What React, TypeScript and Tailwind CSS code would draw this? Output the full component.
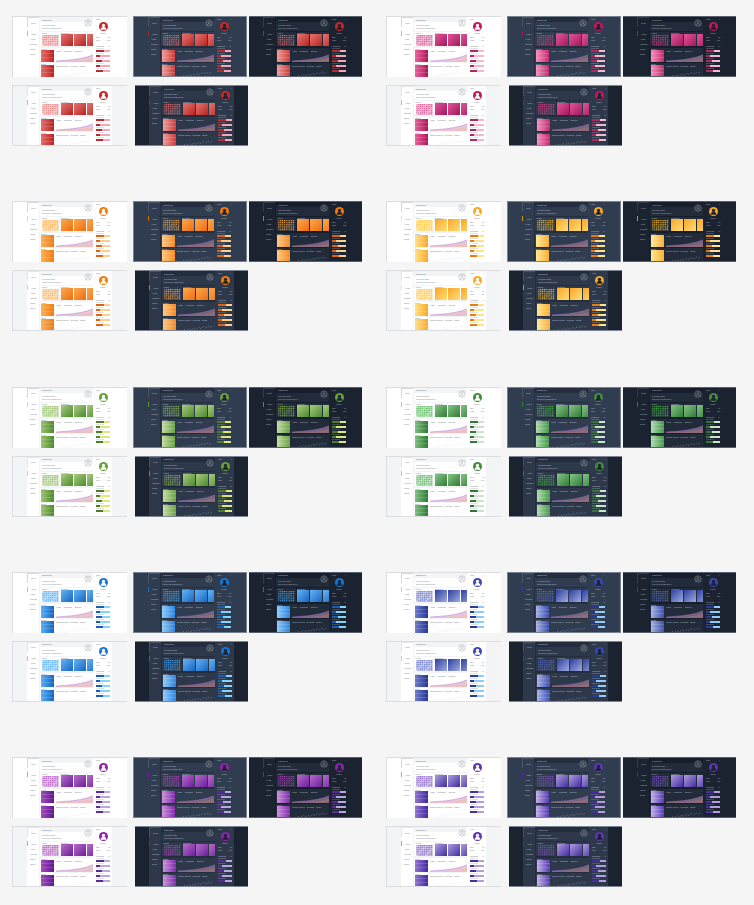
type Mode = "light" | "lightAlt" | "slate" | "navy" | "navyAlt";

type Theme = {
  tile: string;
  stack: string;
  stackDark: string;
  solid: string;
  bar: string;
  soft: string;
  line: string;
  lineDark: string;
  cell: string;
};

const themes: Record<string, Theme> = {
  red: { tile: "from-[#e57373] to-[#b71c1c]", stack: "from-[#e26a6a] to-[#b82020]", stackDark: "from-[#f09a9a] to-[#c93a3a]", solid: "bg-[#c62828]", bar: "bg-[#a51818]", soft: "bg-[#f4a6b8]", line: "border-[#f3a0a0]", lineDark: "border-[#a52a2a]", cell: "#e57373" },
  magenta: { tile: "from-[#e0559a] to-[#a3125c]", stack: "from-[#e85f9f] to-[#ad1457]", stackDark: "from-[#f48fbe] to-[#c2266f]", solid: "bg-[#c2185b]", bar: "bg-[#a0104e]", soft: "bg-[#f6b6cf]", line: "border-[#f3a0c4]", lineDark: "border-[#a3195f]", cell: "#d6438b" },
  orange: { tile: "from-[#f9a94b] to-[#ef6c00]", stack: "from-[#fbb152] to-[#ef7a0a]", stackDark: "from-[#fcc77e] to-[#f28a1e]", solid: "bg-[#f57c00]", bar: "bg-[#d95000]", soft: "bg-[#ffcf8a]", line: "border-[#fbc98a]", lineDark: "border-[#c9710f]", cell: "#f9a94b" },
  amber: { tile: "from-[#f8a51f] to-[#ffdf73]", stack: "from-[#ffe080] to-[#f9a825]", stackDark: "from-[#ffe88f] to-[#f9ae2f]", solid: "bg-[#f9a825]", bar: "bg-[#e26a00]", soft: "bg-[#ffe38a]", line: "border-[#ffe38a]", lineDark: "border-[#c9941f]", cell: "#fbc02d" },
  green: { tile: "from-[#a9cc80] to-[#4a8a2a]", stack: "from-[#9cc46f] to-[#4d8a2c]", stackDark: "from-[#c3dca3] to-[#6aa344]", solid: "bg-[#689f38]", bar: "bg-[#33691e]", soft: "bg-[#dde87c]", line: "border-[#c5e1a5]", lineDark: "border-[#5f8f35]", cell: "#8bb95c" },
  forest: { tile: "from-[#86c489] to-[#2e7d32]", stack: "from-[#7fbf83] to-[#2e7d32]", stackDark: "from-[#aedbb0] to-[#469a4a]", solid: "bg-[#43893f]", bar: "bg-[#1b5e20]", soft: "bg-[#c8e6c9]", line: "border-[#a5d6a7]", lineDark: "border-[#2e7d32]", cell: "#4caf50" },
  blue: { tile: "from-[#64b5f6] to-[#1565c0]", stack: "from-[#5aaef2] to-[#1565c0]", stackDark: "from-[#8ecbf9] to-[#2b84dc]", solid: "bg-[#1976d2]", bar: "bg-[#0d47a1]", soft: "bg-[#81d4fa]", line: "border-[#90caf9]", lineDark: "border-[#1e6fb8]", cell: "#42a5f5" },
  indigo: { tile: "from-[#2f3d9e] to-[#a3acdf]", stack: "from-[#6f7cc9] to-[#283593]", stackDark: "from-[#a9b2e2] to-[#3f4fb0]", solid: "bg-[#3949ab]", bar: "bg-[#1a237e]", soft: "bg-[#90caf9]", line: "border-[#c5cae9]", lineDark: "border-[#303f9f]", cell: "#5c6bc0" },
  purple: { tile: "from-[#bb6bca] to-[#6a1b9a]", stack: "from-[#a44cbb] to-[#5e1690]", stackDark: "from-[#cf8edb] to-[#7d2aa8]", solid: "bg-[#8e24aa]", bar: "bg-[#4a148c]", soft: "bg-[#b9a7e0]", line: "border-[#ce93d8]", lineDark: "border-[#7b1fa2]", cell: "#ab47bc" },
  violet: { tile: "from-[#b39ddb] to-[#4527a0]", stack: "from-[#9274cf] to-[#4527a0]", stackDark: "from-[#c4afe6] to-[#5b38b3]", solid: "bg-[#5e35b1]", bar: "bg-[#311b92]", soft: "bg-[#b39ddb]", line: "border-[#b39ddb]", lineDark: "border-[#512da8]", cell: "#7e57c2" },
};

const skins: Record<Mode, { dark: boolean; frame: string; margin: string; side: string; main: string; card: string; right: string; text: string; faint: string; box: string }> = {
  light: { dark: false, frame: "border-t border-l border-[#dcdde0]", margin: "bg-white", side: "bg-white", main: "bg-[#f3f4f6]", card: "bg-white", right: "bg-white", text: "text-[#555b66]", faint: "bg-[#c4c7cd]", box: "border-[#d5d7db]" },
  lightAlt: { dark: false, frame: "border-y border-l border-[#dcdde0]", margin: "bg-[#f3f4f6]", side: "bg-white", main: "bg-[#f3f4f6]", card: "bg-white", right: "bg-white", text: "text-[#555b66]", faint: "bg-[#c4c7cd]", box: "border-[#e4e5e8]" },
  slate: { dark: true, frame: "border border-[#76808f]", margin: "bg-[#303d50]", side: "bg-[#303d50]", main: "bg-[#242e3e]", card: "bg-[#303d50]", right: "bg-[#303d50]", text: "text-[#d5dae2]", faint: "bg-[#77818f]", box: "border-[#4a5567]" },
  navy: { dark: true, frame: "border-y border-[#55606f]", margin: "bg-[#1b2331]", side: "bg-[#1b2331]", main: "bg-[#171e2b]", card: "bg-[#212b3a]", right: "bg-[#1b2331]", text: "text-[#cdd2da]", faint: "bg-[#697382]", box: "border-[#323c4b]" },
  navyAlt: { dark: true, frame: "border-y border-[#7a8493]", margin: "bg-[#1b2331]", side: "bg-[#2d394b]", main: "bg-[#232d3d]", card: "bg-[#2d394b]", right: "bg-[#2d394b]", text: "text-[#d5dae2]", faint: "bg-[#77818f]", box: "border-[#465164]" },
};

const navItems = ["Home", "Alerts", "Reports", "Users", "Setup"];

function Label({ children, className = "" }: { children: string; className?: string }) {
  return <span className={`block font-['Liberation_Sans',sans-serif] text-[2px] leading-[2px] whitespace-nowrap opacity-80 ${className}`}>{children}</span>;
}

function Person({ color }: { color: string }) {
  return (
    <svg viewBox="0 0 20 20" className="h-[9px] w-[9px]">
      <circle cx="10" cy="7.5" r="3.6" fill={color} />
      <path d="M3.500 17c.5-4.500 3.200-6.300 6.500-6.300s6 1.800 6.500 6.300z" fill={color} />
    </svg>
  );
}

function Heatmap({ color, dark }: { color: string; dark: boolean }) {
  const rects = [];
  for (let row = 0; row < 6; row++) {
    for (let col = 0; col < 9; col++) {
      rects.push(<rect key={`${row}-${col}`} x={col * 1.9} y={row * 1.9} width={dark ? 1.2 : 1.6} height={dark ? 1.2 : 1.6} fill={color} opacity={(row + col) % 5 === 0 ? 0.55 : dark ? 0.9 : 0.8} />);
    }
  }
  return (
    <svg viewBox="0 0 17 11.400" className="mx-auto block h-[11px] w-[17px]">
      {rects}
    </svg>
  );
}

function AreaChart({ dark }: { dark: boolean }) {
  return (
    <svg viewBox="0 0 36 9" preserveAspectRatio="none" className="mt-auto h-[8px] w-full">
      <path d="M0 8 L8 7.200 L16 6.500 L24 5 L30 3.500 L36 1 L36 9 L0 9Z" fill={dark ? "#7f6c82" : "#e4bcd8"} opacity="0.85" />
      <path d="M0 8 L8 7.200 L16 6.500 L24 5 L30 3.500 L36 1" fill="none" stroke="#a877d8" strokeWidth="0.5" />
      <path d="M0 8.500 L12 8.200 L22 7.400 L30 6 L36 4 L36 9 L0 9Z" fill={dark ? "#a3707a" : "#efc0ad"} opacity="0.6" />
    </svg>
  );
}

function ScatterChart() {
  const dots = Array.from({ length: 20 }, (_, i) => ({ x: 1 + i * 1.8, y: 8 - i * 0.25 - (i % 3) * 0.7 }));
  return (
    <svg viewBox="0 0 36 9" className="mt-auto h-[8px] w-full">
      {dots.map((d, i) => (
        <circle key={i} cx={d.x} cy={d.y} r="0.4" fill={i % 2 ? "#a6d8ea" : "#dcc4ea"} />
      ))}
    </svg>
  );
}

function Stack({ gradient }: { gradient: string }) {
  return (
    <div className="flex w-[13px] shrink-0 flex-col">
      <div className={`h-[4px] border-b border-white/15 bg-gradient-to-r ${gradient}`} />
      <div className={`h-[4px] border-b border-white/15 bg-gradient-to-r ${gradient}`} />
      <div className={`h-[4px] bg-gradient-to-r ${gradient}`} />
    </div>
  );
}

function Thumb({ mode, theme, width }: { mode: Mode; theme: Theme; width: string }) {
  const skin = skins[mode];
  const stackGradient = skin.dark ? theme.stackDark : theme.stack;
  return (
    <div className={`flex h-[61px] shrink-0 overflow-hidden ${width} ${skin.frame} ${skin.margin}`}>
      <div className="w-[14px] shrink-0" />

      {/* nav */}
      <div className={`flex w-[12px] shrink-0 flex-col ${skin.side} ${skin.text}`}>
        <div className={`mb-[4px] flex h-[10px] items-center justify-center border-t border-l ${skin.box}`}>
          <Label>Menu</Label>
        </div>
        {navItems.map((item, i) => (
          <div key={item} className={`flex h-[5px] items-center pl-[3px] ${i === 0 ? `border-l ${skin.dark ? theme.lineDark : theme.line}` : ""}`}>
            <Label>{item}</Label>
          </div>
        ))}
      </div>

      {/* main */}
      <div className={`flex w-[54px] shrink-0 flex-col overflow-hidden pl-[1px] ${skin.main} ${skin.text}`}>
        <div className="flex h-[5px] shrink-0 items-center pl-[2px]">
          <Label>Dashboard</Label>
        </div>
        <div className={`relative flex h-[9px] shrink-0 flex-col justify-center gap-[1px] pl-[2px] ${skin.card}`}>
          <Label>Welcome back</Label>
          <Label>Overview of this week</Label>
          <svg viewBox="0 0 10 10" className="absolute top-[-3px] right-[1px] h-[8px] w-[8px]" fill="none" stroke="#a5a9b0" strokeWidth="0.6">
            <circle cx="5" cy="5" r="4" />
            <circle cx="5" cy="4" r="1.500" />
            <path d="M2.500 8c.5-1.500 1.500-2 2.500-2s2 .5 2.500 2" />
          </svg>
        </div>
        <div className="mt-[1px] flex h-[14px] shrink-0 gap-[1px]">
          <div className={`flex w-[20px] shrink-0 flex-col gap-[1px] px-[1px] ${skin.card}`}>
            <Label>Activity</Label>
            <Heatmap color={theme.cell} dark={skin.dark} />
          </div>
          <div className={`flex min-w-0 flex-1 flex-col ${skin.card}`}>
            <Label className="h-[2px]">Summary</Label>
            <div className="flex flex-1 gap-[1px]">
              <div className={`w-[12px] shrink-0 bg-gradient-to-br ${theme.tile}`} />
              <div className={`w-[12px] shrink-0 bg-gradient-to-br ${theme.tile}`} />
              <div className={`w-[12px] shrink-0 bg-gradient-to-br ${theme.tile}`} />
            </div>
          </div>
        </div>
        <div className={`mt-[2px] flex h-[14px] shrink-0 gap-[2px] pl-[1px] ${skin.card}`}>
          <div className="flex flex-col">
            <Label>Traffic</Label>
            <Stack gradient={stackGradient} />
          </div>
          <div className="flex min-w-0 flex-1 flex-col">
            <div className="flex gap-[3px] pt-[2px]">
              <Label>Visits</Label>
              <Label>Sessions</Label>
              <Label>Bounce</Label>
            </div>
            <AreaChart dark={skin.dark} />
          </div>
        </div>
        <div className={`mt-[1px] flex h-[15px] shrink-0 gap-[2px] pl-[1px] ${skin.card}`}>
          <div className="flex flex-col">
            <Label>Sales</Label>
            <Stack gradient={stackGradient} />
          </div>
          <div className="flex min-w-0 flex-1 flex-col">
            <div className="flex gap-[2px] pt-[2px]">
              <Label>Orders placed</Label>
              <Label>Refunds</Label>
              <Label>Totals</Label>
            </div>
            <ScatterChart />
          </div>
        </div>
      </div>

      {/* profile */}
      <div className={`flex w-[19px] shrink-0 flex-col pt-[1px] pr-[2px] pl-[3px] ${skin.right} ${skin.text}`}>
        <div className="flex justify-between">
          <Label>User</Label>
          <Label>×</Label>
        </div>
        <div className={`mx-auto mt-[2px] flex h-[9px] w-[9px] shrink-0 items-center justify-center rounded-full ${theme.solid}`}>
          <Person color={skin.dark ? "#1b2331" : "#ffffff"} />
        </div>
        <Label className="mt-[1px] text-center">Profile</Label>
        <div className="mt-[2px] flex justify-between">
          <Label>123</Label>
          <Label>45</Label>
        </div>
        <div className="mt-[1px] flex justify-between">
          <Label>Plan</Label>
          <Label>Pro</Label>
        </div>
        <div className="mt-[4px] flex justify-between">
          <Label>Progress</Label>
          <Label>%</Label>
        </div>
        {[60, 30, 45, 25, 50].map((pct, i) => (
          <div key={i} className="mt-[1px] flex flex-col">
            <div className={`mb-[1px] h-[1px] w-[8px] opacity-50 ${skin.faint}`} />
            <div className={`flex h-[2px] ${theme.soft}`}>
              <div className={`${theme.bar} opacity-85`} style={{ width: `${pct}%` }} />
            </div>
          </div>
        ))}
      </div>
    </div>
  );
}

function Group({ theme }: { theme: Theme }) {
  return (
    <div className="flex h-[185.25px] w-[374px] flex-col gap-[8px]">
      <div className="flex">
        <Thumb mode="light" theme={theme} width="w-[115px]" />
        <div className="w-[6px] shrink-0" />
        <Thumb mode="slate" theme={theme} width="w-[114px]" />
        <div className="w-[2px] shrink-0" />
        <Thumb mode="navy" theme={theme} width="w-[113px]" />
      </div>
      <div className="flex">
        <Thumb mode="lightAlt" theme={theme} width="w-[115px]" />
        <div className="w-[8px] shrink-0" />
        <Thumb mode="navyAlt" theme={theme} width="w-[113px]" />
      </div>
    </div>
  );
}

export default function App() {
  const order = ["red", "magenta", "orange", "amber", "green", "forest", "blue", "indigo", "purple", "violet"];
  return (
    <div className="h-[905px] w-[754px] overflow-hidden bg-[#f5f5f5] pt-[16px] pl-[12px]">
      <div className="grid grid-cols-[374px_374px]">
        {order.map((name) => (
          <Group key={name} theme={themes[name]} />
        ))}
      </div>
    </div>
  );
}
